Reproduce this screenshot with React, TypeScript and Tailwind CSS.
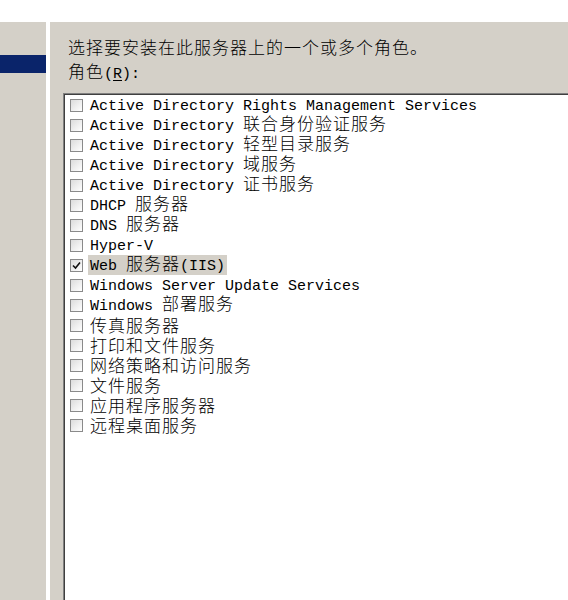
import React from "react";

const roles: { label: string; checked?: boolean }[] = [
  { label: "Active Directory Rights Management Services" },
  { label: "Active Directory 联合身份验证服务" },
  { label: "Active Directory 轻型目录服务" },
  { label: "Active Directory 域服务" },
  { label: "Active Directory 证书服务" },
  { label: "DHCP 服务器" },
  { label: "DNS 服务器" },
  { label: "Hyper-V" },
  { label: "Web 服务器(IIS)", checked: true },
  { label: "Windows Server Update Services" },
  { label: "Windows 部署服务" },
  { label: "传真服务器" },
  { label: "打印和文件服务" },
  { label: "网络策略和访问服务" },
  { label: "文件服务" },
  { label: "应用程序服务器" },
  { label: "远程桌面服务" },
];

// SimSun-style mixed text: half-width latin runs, full-width CJK runs
function Mixed({ text }: { text: string }) {
  const runs = text.match(/[\x00-\x7f]+|[^\x00-\x7f]+/g) ?? [];
  return (
    <>
      {runs.map((r, i) =>
        /^[\x00-\x7f]/.test(r) ? (
          <span
            key={i}
            className="font-['Liberation_Mono',monospace] text-[15px] leading-[16px] whitespace-pre"
          >
            {r}
          </span>
        ) : (
          <span
            key={i}
            className="font-['Noto_Sans_CJK_SC',sans-serif] text-[17px] leading-[16px] tracking-[1px] font-light"
          >
            {r}
          </span>
        )
      )}
    </>
  );
}

function Box({ checked }: { checked?: boolean }) {
  return (
    <div className="w-[13px] h-[13px] border border-[#8a8a8a] bg-gradient-to-br from-[#dcdcdc] to-white flex items-center justify-center shrink-0">
      {checked && (
        <svg width="9" height="9" viewBox="0 0 9 9">
          <path d="M1 4.5 L3.5 7 L8 1.5" fill="none" stroke="#111" strokeWidth="1.6" />
        </svg>
      )}
    </div>
  );
}

export default function App() {
  return (
    <div className="w-[568px] h-[600px] overflow-hidden bg-white flex flex-col text-black">
      <div className="h-[22px] bg-white shrink-0" />
      <div className="flex flex-1 min-h-0">
        {/* left nav strip */}
        <div className="w-[46px] bg-[#d4d0c8] pt-[33px] shrink-0">
          <div className="h-[18px] bg-[#0a246a]" />
        </div>
        <div className="w-[4px] bg-white shrink-0" />
        <div className="flex-1 bg-[#d4d0c8] flex flex-col pl-[13px] min-w-0">
          <div className="pl-[5px] pt-[14px]">
            <div className="h-[24px] flex items-center">
              <span>
                <Mixed text="选择要安装在此服务器上的一个或多个角色。" />
              </span>
            </div>
            <div className="h-[24px] flex items-center">
              <span>
                <span className="font-['Noto_Sans_CJK_SC',sans-serif] text-[17px] leading-[16px] tracking-[1px] font-light">
                  角色
                </span>
                <span className="font-['Liberation_Mono',monospace] text-[15px] leading-[16px]">
                  (<span className="underline underline-offset-2">R</span>):
                </span>
              </span>
            </div>
          </div>
          <div className="mt-[9px] flex-1 border-l border-t border-[#808080]">
            <div className="h-full border-l border-t border-[#404040] bg-white pl-[5px]">
              {roles.map((r) => (
                <div key={r.label} className="h-[20px] flex items-center">
                  <Box checked={r.checked} />
                  <span
                    className={
                      "ml-[5px] px-[2px] h-[20px] flex items-center whitespace-nowrap " +
                      (r.checked ? "bg-[#d4d0c8]" : "")
                    }
                  >
                    <span className="leading-[16px]">
                      <Mixed text={r.label} />
                    </span>
                  </span>
                </div>
              ))}
            </div>
          </div>
        </div>
      </div>
    </div>
  );
}
